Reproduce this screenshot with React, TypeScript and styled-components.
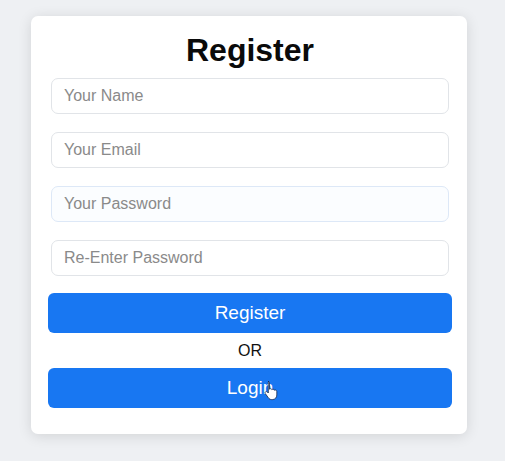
import React from "react";
import styled, { createGlobalStyle } from "styled-components";

const Global = createGlobalStyle`
  html, body { margin: 0; padding: 0; }
  body {
    background: #eef0f3;
    font-family: "Liberation Sans", Arial, sans-serif;
    width: 505px;
    height: 461px;
    overflow: hidden;
  }
`;

const Page = styled.div`
  padding: 16px 0 0 31px;
`;

const Card = styled.form`
  width: 436px;
  box-sizing: border-box;
  background: #ffffff;
  border-radius: 7px;
  box-shadow: 0 2px 14px rgba(0, 0, 0, 0.12);
  padding: 16px 15px 26px 17px;
  display: flex;
  flex-direction: column;
`;

const Title = styled.h1`
  margin: 0 0 9px;
  font-size: 32px;
  line-height: 37px;
  font-weight: 700;
  text-align: center;
  color: #0a0a0a;
`;

const Fields = styled.div`
  display: flex;
  flex-direction: column;
  gap: 18px;
  padding: 0 3px;
`;

const Input = styled.input<{ $focus?: boolean }>`
  height: 36px;
  box-sizing: border-box;
  width: 100%;
  border: 1px solid ${(p) => (p.$focus ? "#dde8f7" : "#e1e4e8")};
  border-radius: 7px;
  padding: 0 12px;
  font-family: "Liberation Sans", Arial, sans-serif;
  font-size: 16px;
  color: #333;
  background: ${(p) => (p.$focus ? "#fbfdff" : "#fff")};
  outline: none;
  &::placeholder { color: #8a8a8a; }
`;

const Button = styled.button`
  position: relative;
  height: 40px;
  width: 100%;
  border: none;
  border-radius: 6px;
  background: #1877f2;
  color: #ffffff;
  font-family: "Liberation Sans", Arial, sans-serif;
  font-size: 19px;
  cursor: pointer;
`;

const Actions = styled.div`
  display: flex;
  flex-direction: column;
  margin-top: 17px;
`;

const Or = styled.div`
  text-align: center;
  font-size: 16px;
  line-height: 35px;
  color: #111;
`;

const Cursor = styled.svg`
  position: absolute;
  left: 216px;
  top: 12px;
  width: 16px;
  height: 22px;
`;

export default function App() {
  return (
    <>
      <Global />
      <Page>
        <Card onSubmit={(e) => e.preventDefault()}>
          <Title>Register</Title>
          <Fields>
            <Input placeholder="Your Name" />
            <Input placeholder="Your Email" />
            <Input placeholder="Your Password" $focus />
            <Input placeholder="Re-Enter Password" />
          </Fields>
          <Actions>
            <Button type="button">Register</Button>
            <Or>OR</Or>
            <Button type="button">
              Login
              <Cursor viewBox="0 0 16 22">
                <path
                  d="M4 1.5c.8 0 1.5.6 1.5 1.5v6.2c.3-.4.8-.6 1.3-.5.6.1 1 .5 1.1 1 .3-.4.8-.6 1.3-.5.6.1 1 .6 1.1 1.1.3-.3.7-.4 1.2-.3.8.1 1.3.8 1.3 1.6v3.4c0 2.5-1.7 4.6-4.4 4.6H7.7c-1.4 0-2.5-.7-3.3-1.8L1.3 13.6c-.4-.6-.3-1.4.3-1.8.6-.4 1.300-.3 1.8.2l.9 1V3c0-.9.1-1.5.7-1.5z"
                  fill="#ffffff"
                  stroke="#1b2a4a"
                  strokeWidth="0.8"
                />
              </Cursor>
            </Button>
          </Actions>
        </Card>
      </Page>
    </>
  );
}
